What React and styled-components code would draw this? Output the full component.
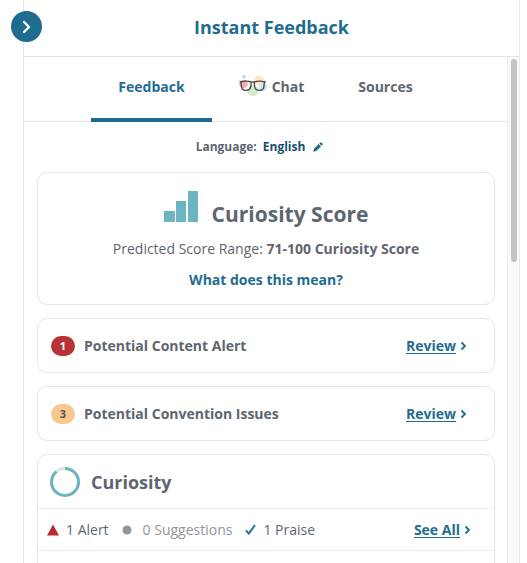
import styled, { createGlobalStyle } from "styled-components";

const GlobalStyle = createGlobalStyle`
  * {
    box-sizing: border-box;
  }

  body {
    margin: 0;
    background: #ffffff;
    color: #5d6670;
    font-family: "Open Sans", "Noto Sans", sans-serif;
    font-size: 14px;
    line-height: 20px;
    overflow: hidden;
  }

  button {
    padding: 0;
    border: 0;
    background: none;
    color: inherit;
    font: inherit;
    cursor: pointer;
  }

  svg {
    display: block;
    flex: none;
  }
`;

const Panel = styled.aside`
  position: relative;
  display: flex;
  flex-direction: column;
  height: 100vh;
  margin: 0 7px 0 23px;
  border-left: 1px solid #e2e5e8;
  border-right: 1px solid #e8eaec;
`;

const CollapseButton = styled.button`
  position: absolute;
  top: 11px;
  left: -13px;
  display: flex;
  align-items: center;
  justify-content: center;
  width: 31px;
  height: 31px;
  border-radius: 50%;
  background: #1f6c8f;
  color: #ffffff;
`;

const Header = styled.header`
  padding: 13px 0 15px;
  border-bottom: 1px solid #dfe3e5;
  text-align: center;
`;

const Title = styled.h1`
  margin: 0;
  color: #1f6c8f;
  font-size: 18px;
  font-weight: 700;
  line-height: 28px;
`;

const Body = styled.div`
  display: grid;
  grid-template-columns: 1fr 12px;
  flex: 1;
  min-height: 0;
`;

const Content = styled.div`
  min-width: 0;
  overflow: hidden;
`;

const ScrollTrack = styled.div`
  padding: 2px 2px 2px 3px;
  border-left: 1px solid #ececec;
  background: #fafafa;
`;

const ScrollThumb = styled.div`
  height: 203px;
  border-radius: 4px;
  background: #c4c4c4;
`;

const Tabs = styled.div`
  display: flex;
  justify-content: center;
  border-bottom: 1px solid #e2e5e8;
`;

const Tab = styled.button`
  display: flex;
  align-items: center;
  gap: 5px;
  height: 65px;
  margin-bottom: -1px;
  padding: 0 27px 2px;
  border-bottom: 4px solid ${({ $active }) => ($active ? "#1f6c8f" : "transparent")};
  color: ${({ $active }) => ($active ? "#1f6c8f" : "#5d6670")};
  font-weight: 700;
`;

const Language = styled.div`
  display: flex;
  align-items: center;
  justify-content: center;
  gap: 6px;
  height: 50px;
  padding-right: 12px;
  font-size: 12px;
  font-weight: 700;
`;

const LanguageButton = styled.button`
  display: flex;
  align-items: center;
  gap: 8px;
  color: #17506e;
`;

const Cards = styled.main`
  display: flex;
  flex-direction: column;
  gap: 13px;
  padding: 0 12px 13px 13px;
`;

const Card = styled.section`
  border: 1px solid #e1e7e8;
  border-radius: 10px;
  background: #ffffff;
`;

const ScoreCard = styled(Card)`
  display: flex;
  flex-direction: column;
  align-items: center;
  padding: 17px 12px 14px;
`;

const ScoreHeading = styled.div`
  display: flex;
  align-items: flex-start;
  gap: 14px;
`;

const ScoreTitle = styled.h2`
  margin: 8px 0 0;
  font-size: 21px;
  font-weight: 700;
  line-height: 32px;
`;

const Range = styled.p`
  margin: 9px 0 11px;
`;

const HelpLink = styled.a`
  color: #1f6c8f;
  font-weight: 700;
  text-decoration: none;
`;

const IssueCard = styled(Card)`
  display: flex;
  align-items: center;
  gap: 9px;
  padding: 17px 27px 16px 13px;
`;

const Badge = styled.span`
  width: 24px;
  border-radius: 10px;
  background: ${({ $alert }) => ($alert ? "#b83338" : "#fac88e")};
  color: ${({ $alert }) => ($alert ? "#ffffff" : "#4c5358")};
  font-size: 11px;
  font-weight: 700;
  text-align: center;
`;

const IssueTitle = styled.h3`
  flex: 1;
  margin: 0;
  font-size: 14px;
  font-weight: 700;
`;

const ActionLink = styled.a`
  display: flex;
  align-items: center;
  gap: 4px;
  margin-left: auto;
  color: #1f6c8f;
  font-weight: 700;
  text-decoration: none;

  span {
    text-decoration: underline;
    text-decoration-thickness: 1px;
    text-underline-offset: 2px;
  }
`;

const TopicHeader = styled.div`
  display: flex;
  align-items: center;
  gap: 11px;
  padding: 12px 12px 11px;
  border-bottom: 1px solid #e9edee;
`;

const TopicTitle = styled.h2`
  margin: 0;
  font-size: 18px;
  font-weight: 700;
  line-height: 30px;
`;

const Stats = styled.div`
  display: flex;
  align-items: center;
  gap: 13px;
  height: 42px;
  padding: 0 23px 0 9px;
  border-bottom: 1px solid #e9edee;
`;

const Stat = styled.span`
  display: flex;
  align-items: center;
  gap: ${({ $gap }) => $gap || 7}px;
  color: ${({ $muted }) => ($muted ? "#90969c" : "#5d6670")};
`;

const TopicBody = styled.div`
  height: 60px;
`;

function Chevron() {
  return (
    <svg width="7" height="10" viewBox="0 0 7 10" fill="none" aria-hidden="true">
      <path d="M1.5 1.5 5 5 1.5 8.5" stroke="currentColor" strokeWidth="1.8" />
    </svg>
  );
}

function GlassesIcon() {
  return (
    <svg width="28" height="24" viewBox="0 1 28 24" fill="none" aria-hidden="true">
      <circle cx="4.5" cy="10" r="4.3" fill="#f3b1b4" />
      <circle cx="5" cy="2.8" r="1.7" fill="#acd9e0" />
      <circle cx="20" cy="6.2" r="5" fill="#fce7c9" />
      <circle cx="14" cy="16.5" r="5.6" fill="#d5ebcc" />
      <circle cx="24" cy="13" r="4" fill="#cbe8f8" />
      <g stroke="#4a4546" strokeWidth="1.3" strokeLinejoin="round">
        <path d="M2 7.800Q7 6.600 12 7.800Q12.400 12 11.200 14.500Q10.300 16.300 7 16.300Q3.800 16.300 3 14.500Q2.200 12 2 7.800Z" />
        <path d="M25.400 7.800Q20.400 6.600 15.400 7.800Q15 12 16.200 14.500Q17.100 16.300 20.400 16.300Q23.600 16.300 24.400 14.500Q25.200 12 25.400 7.800Z" />
        <path d="M.6 7.500 2 7.800M12 8.300Q13.700 7.600 15.400 8.300M25.400 7.800 26.800 7.500" />
      </g>
    </svg>
  );
}

function PencilIcon() {
  return (
    <svg width="10" height="10" viewBox="0 0 10 10" fill="#1f6c8f" aria-hidden="true">
      <path d="M.3 9.700 1 6.800 5.700 2.100 8 4.400 3.200 9.100ZM6.300 1.500 7.400.4q.5-.4 1 0l1.200 1.200q.5.500 0 1L8.500 3.700Z" />
    </svg>
  );
}

function BarsIcon() {
  return (
    <svg width="34" height="32" viewBox="0 0 34 32" fill="#6ab5bf" aria-hidden="true">
      <rect y="21" width="11" height="11" />
      <rect x="12" y="11" width="10" height="21" />
      <rect x="24" y="1" width="10" height="31" />
    </svg>
  );
}

function ProgressRing() {
  return (
    <svg width="30" height="30" viewBox="0 0 30 30" fill="none" strokeWidth="3" aria-hidden="true">
      <circle cx="15" cy="15" r="13.500" stroke="#dce2e7" />
      <circle
        cx="15"
        cy="15"
        r="13.500"
        stroke="#6ab5bf"
        pathLength="100"
        strokeDasharray="89 11"
        transform="rotate(-90 15 15)"
      />
    </svg>
  );
}

const issues = [
  { count: 1, title: "Potential Content Alert", alert: true },
  { count: 3, title: "Potential Convention Issues", alert: false },
];

export default function App() {
  return (
    <>
      <GlobalStyle />
      <Panel>
        <Header>
          <Title>Instant Feedback</Title>
        </Header>
        <CollapseButton type="button" aria-label="Collapse panel">
          <svg width="10" height="14" viewBox="0 0 10 14" fill="none">
            <path
              d="M2 2 7 7 2 12"
              stroke="currentColor"
              strokeWidth="2.400"
              strokeLinecap="round"
              strokeLinejoin="round"
            />
          </svg>
        </CollapseButton>

        <Body>
          <Content>
            <Tabs role="tablist">
              <Tab type="button" role="tab" aria-selected="true" $active>
                Feedback
              </Tab>
              <Tab type="button" role="tab" aria-selected="false">
                <GlassesIcon />
                Chat
              </Tab>
              <Tab type="button" role="tab" aria-selected="false">
                Sources
              </Tab>
            </Tabs>

            <Language>
              Language:
              <LanguageButton type="button">
                English
                <PencilIcon />
              </LanguageButton>
            </Language>

            <Cards>
              <ScoreCard>
                <ScoreHeading>
                  <BarsIcon />
                  <ScoreTitle>Curiosity Score</ScoreTitle>
                </ScoreHeading>
                <Range>
                  Predicted Score Range: <b>71-100 Curiosity Score</b>
                </Range>
                <HelpLink href="#help">What does this mean?</HelpLink>
              </ScoreCard>

              {issues.map((issue) => (
                <IssueCard key={issue.title}>
                  <Badge $alert={issue.alert}>{issue.count}</Badge>
                  <IssueTitle>{issue.title}</IssueTitle>
                  <ActionLink href="#review">
                    <span>Review</span>
                    <Chevron />
                  </ActionLink>
                </IssueCard>
              ))}

              <Card>
                <TopicHeader>
                  <ProgressRing />
                  <TopicTitle>Curiosity</TopicTitle>
                </TopicHeader>
                <Stats>
                  <Stat>
                    <svg width="12" height="12" viewBox="0 0 12 12" fill="#b9292e">
                      <path d="M6 .5 12 11.500H0Z" />
                    </svg>
                    1 Alert
                  </Stat>
                  <Stat $muted $gap={11}>
                    <svg width="10" height="10" viewBox="0 0 10 10" fill="#90969c">
                      <circle cx="5" cy="5" r="4.500" />
                    </svg>
                    0 Suggestions
                  </Stat>
                  <Stat>
                    <svg width="11" height="11" viewBox="0 0 11 11" fill="none">
                      <path d="M1 6.500 3.800 9.500 10 1.200" stroke="#1f7890" strokeWidth="2" />
                    </svg>
                    1 Praise
                  </Stat>
                  <ActionLink href="#all">
                    <span>See All</span>
                    <Chevron />
                  </ActionLink>
                </Stats>
                <TopicBody />
              </Card>
            </Cards>
          </Content>
          <ScrollTrack>
            <ScrollThumb />
          </ScrollTrack>
        </Body>
      </Panel>
    </>
  );
}
